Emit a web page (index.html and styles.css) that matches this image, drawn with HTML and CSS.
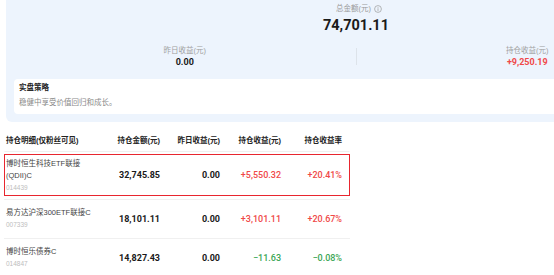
FILE: index.html
```html
<!DOCTYPE html>
<html lang="zh-CN">
<head>
<meta charset="utf-8">
<link rel="stylesheet" href="styles.css">
</head>
<body>
<div class="page">
  <section class="summary">
    <div class="total-label">总金额(元)
      <svg class="info" viewBox="0 0 8 8" width="8" height="8"><circle cx="4" cy="4" r="3.4" fill="none" stroke="#9a9a9a" stroke-width="0.7"/><rect x="3.65" y="3.3" width="0.7" height="2.6" fill="#9a9a9a"/><rect x="3.65" y="2" width="0.7" height="0.7" fill="#9a9a9a"/></svg>
    </div>
    <div class="total-value">74,701.11</div>
    <div class="stats">
      <div class="stat">
        <div class="stat-label">昨日收益(元)</div>
        <div class="stat-value">0.00</div>
      </div>
      <div class="divider"></div>
      <div class="stat">
        <div class="stat-label">持仓收益(元)</div>
        <div class="stat-value red">+9,250.19</div>
      </div>
    </div>
    <div class="strategy">
      <div class="strategy-title">实盘策略</div>
      <div class="strategy-desc">稳健中享受价值回归和成长。</div>
    </div>
  </section>

  <section class="table">
    <div class="thead">
      <div class="c-name">持仓明细(仅粉丝可见)</div>
      <div class="c-num">持仓金额(元)</div>
      <div class="c-num">昨日收益(元)</div>
      <div class="c-num">持仓收益(元)</div>
      <div class="c-num">持仓收益率</div>
    </div>
    <div class="row">
      <div class="row-inner hl tall">
        <div class="c-name"><div class="fund-name">博时恒生科技ETF联接<br>(QDII)C</div><div class="fund-code">014439</div></div>
        <div class="c-num amt">32,745.85</div>
        <div class="c-num amt">0.00</div>
        <div class="c-num up">+5,550.32</div>
        <div class="c-num up">+20.41%</div>
      </div>
    </div>
    <div class="row">
      <div class="row-inner">
        <div class="c-name"><div class="fund-name">易方达沪深300ETF联接C</div><div class="fund-code">007339</div></div>
        <div class="c-num amt">18,101.11</div>
        <div class="c-num amt">0.00</div>
        <div class="c-num up">+3,101.11</div>
        <div class="c-num up">+20.67%</div>
      </div>
    </div>
    <div class="row">
      <div class="row-inner">
        <div class="c-name"><div class="fund-name">博时恒乐债券C</div><div class="fund-code">014847</div></div>
        <div class="c-num amt">14,827.43</div>
        <div class="c-num amt">0.00</div>
        <div class="c-num down">−11.63</div>
        <div class="c-num down">−0.08%</div>
      </div>
    </div>
  </section>
</div>
</body>
</html>
```

FILE: styles.css
```css
html, body {
  margin: 0;
  padding: 0;
  overflow: hidden;
  background: #ffffff;
}
body {
  font-family: "Liberation Sans", "Noto Sans CJK SC", sans-serif;
  color: #222;
}
.page {
  width: 554px;
  height: 275px;
  overflow: hidden;
}
.summary {
  width: 700px;
  margin-left: 6px;
  background: #edf4fd;
  border-radius: 0 0 6px 6px;
  padding: 4px 0 8px;
  box-sizing: border-box;
}
.total-label {
  display: flex;
  justify-content: center;
  align-items: center;
  gap: 3px;
  font-size: 7.5px;
  line-height: 10px;
  color: #9a9a9a;
  padding-left: 6px;
}
.info { display: block; }
.total-value {
  margin-top: 2px;
  text-align: center;
  font-family: Roboto, "Liberation Sans", sans-serif;
  font-size: 14.5px;
  line-height: 20px;
  font-weight: 700;
  color: #1a1a1a;
}
.stats {
  display: flex;
  align-items: center;
  margin-top: 9px;
  padding: 0 8px;
}
.stat {
  flex: 1;
  text-align: center;
}
.stat-label {
  font-size: 7.5px;
  line-height: 12px;
  color: #a0a0a0;
}
.stat-value {
  font-family: Roboto, "Liberation Sans", sans-serif;
  font-size: 9px;
  line-height: 11px;
  font-weight: 700;
  color: #1a1a1a;
}
.stat-value.red { color: #f04848; }
.divider {
  width: 1px;
  height: 17px;
  background: #dde3ea;
}
.strategy {
  margin: 11px 8px 0;
  background: #ffffff;
  border-radius: 4px;
  padding: 4px 5px 6px;
}
.strategy-title {
  font-size: 7.5px;
  line-height: 10px;
  font-weight: 700;
  color: #222;
}
.strategy-desc {
  margin-top: 5px;
  font-size: 7.5px;
  line-height: 10px;
  color: #8a8a8a;
}
.table {
  width: 346px;
  margin: 4px 0 0 4px;
}
.thead, .row-inner {
  display: grid;
  grid-template-columns: 94px 60px 60px 61px 61px;
  align-items: center;
  border: 1px solid transparent;
  padding: 0 6px 0 1px;
}
.thead {
  height: 26px;
  box-sizing: border-box;
  border-bottom: 1px solid #f0f0f0;
  font-size: 7.5px;
  font-weight: 700;
  color: #222;
}
.c-num { text-align: right; }
.row {
  border-bottom: 1px solid #f0f0f0;
  padding: 2px 0 3px;
}
.row-inner {
  height: 31px;
}
.row-inner.tall { height: 40px; }
.row-inner.hl { border-color: #e8262f; }
.fund-name {
  font-size: 7.5px;
  line-height: 12.5px;
  color: #444;
}
.fund-code {
  font-size: 6.5px;
  line-height: 10px;
  color: #bdbdbd;
}
.amt, .up, .down {
  font-family: Roboto, "Liberation Sans", sans-serif;
  font-size: 9px;
}
.amt {
  font-weight: 700;
  color: #1a1a1a;
}
.up {
  font-weight: 500;
  color: #f04848;
}
.down {
  font-weight: 500;
  color: #3aa655;
}
```
